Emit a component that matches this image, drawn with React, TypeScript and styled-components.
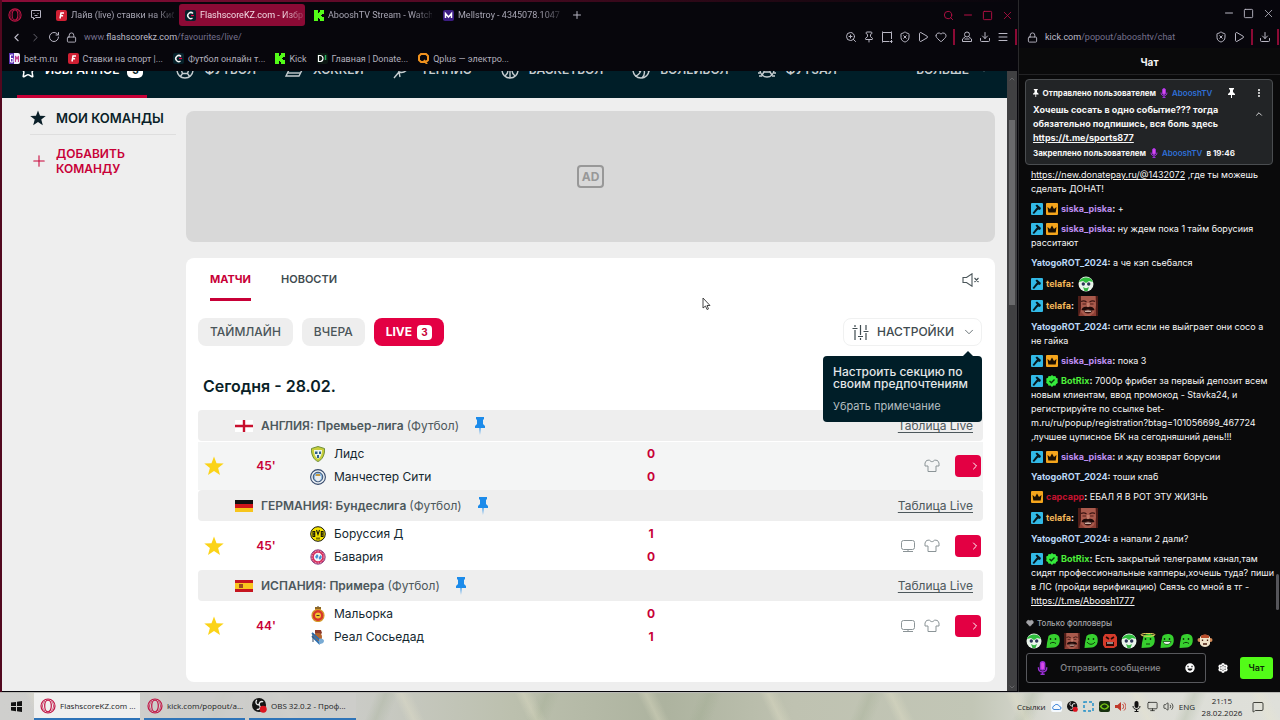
import React from "react";
import styled, { createGlobalStyle } from "styled-components";
import {
  ChevronDown, ChevronLeft, ChevronRight, ChevronUp, Download, EllipsisVertical, Heart, Lock, LucideIcon, Menu,
  MessageSquare, Minus, Monitor, Pin, Play, Plus, RotateCw, Search, Settings, ShieldX, Square, Star, Volume2, X, ZoomIn,
} from "lucide-react";

const ui = `Roboto, "Noto Sans", sans-serif`;
const inter = `Inter, "Noto Sans", sans-serif`;
const crimson = "#c80037";

const GlobalStyle = createGlobalStyle`
  * { box-sizing: border-box; }
  body { margin: 0; background: #07060c; font-family: ${inter}; }
  button { font: inherit; color: inherit; border: 0; background: none; padding: 0; cursor: pointer; }
  a { color: inherit; }
  h1, h2, h3, p, ul { margin: 0; padding: 0; }
  ul { list-style: none; }
  svg { flex: none; display: block; }
`;

/* ---------- shell ---------- */

const Desktop = styled.div`
  position: relative;
  height: 100vh;
  display: grid;
  grid-template-columns: minmax(0, 1fr);
  grid-template-rows: minmax(0, 1fr) 28px;
`;
const Windows = styled.div`
  display: flex;
  min-height: 0;
`;
const Browser = styled.section`
  flex: 1;
  min-width: 0;
  display: flex;
  flex-direction: column;
  background: #07060c;
  border-left: 2px solid #52081f;
`;
const TabStrip = styled.div`
  display: flex;
  align-items: center;
  height: 26px;
  padding: 2px 4px 0 6px;
  border-top: 2px solid;
  border-image: linear-gradient(90deg, #8c0c38 0, #6b0a2c 260px, #1d0712 800px, #07060c 100%) 1;
  border-width: 2px 0 0 0;
  gap: 8px;
  color: #b6b4c2;
`;
const Tabs = styled.div`
  display: flex;
  gap: 3px;
`;
const Tab = styled.button<{ $active?: boolean }>`
  width: 126px;
  height: 22px;
  padding: 0 2px 0 6px;
  display: flex;
  align-items: center;
  gap: 4px;
  border-radius: 3px;
  background: ${(p) => (p.$active ? "#8b0a35" : "transparent")};
  color: ${(p) => (p.$active ? "#f3dbe4" : "#a8a6b4")};
  font: 9px/14px ${ui};
`;
const TabText = styled.span`
  flex: 1;
  min-width: 0;
  white-space: nowrap;
  text-align: left;
  mask-image: linear-gradient(90deg, #000 80%, rgba(0, 0, 0, .2));
`;
const WindowButtons = styled.div<{ $tone: string; $edge?: number }>`
  display: flex;
  align-items: center;
  gap: 8px;
  margin-left: auto;
  padding-right: ${(p) => p.$edge ?? 0}px;
  color: ${(p) => p.$tone};
`;
const AddressBar = styled.div`
  display: flex;
  align-items: center;
  height: 22px;
  padding: 0 1px 0 8px;
  gap: 6px;
  color: #b9b7c4;
  font: 9px/14px ${ui};
`;
const Url = styled.div`
  flex: 1;
  padding-left: 1px;
  color: #75718c;
  white-space: nowrap;
  b { font-weight: 400; color: #bdbbc8; }
`;
const Rule = styled.i`
  width: 2px;
  height: 16px;
  background: #8b0a35;
`;
const Bookmarks = styled.nav`
  display: flex;
  align-items: center;
  height: 23px;
  padding: 0 0 2px 7px;
  gap: 10px;
  color: #b2b0bd;
  font: 9px/14px ${ui};
`;
const Bookmark = styled.a`
  display: flex;
  align-items: center;
  gap: 4px;
  text-decoration: none;
  white-space: nowrap;
`;

/* ---------- site ---------- */

const Viewport = styled.div`
  flex: 1;
  min-height: 0;
  display: flex;
  border-bottom: 1px solid #07060c;
`;
const Page = styled.div`
  flex: 1;
  min-width: 0;
  background: #eeeeee;
  overflow: hidden;
`;
const Scrollbar = styled.div`
  width: 10px;
  margin-right: 1px;
  padding-top: 4px;
  display: flex;
  flex-direction: column;
  align-items: center;
  justify-content: space-between;
  background: #404042;
  color: #77777a;
`;
const ScrollTrack = styled.div`
  flex: 1;
  padding-top: 37px;
`;
const Thumb = styled.div`
  width: 6px;
  height: 185px;
  background: #6a6a6c;
`;
const SportNav = styled.nav`
  display: flex;
  align-items: flex-end;
  gap: 29px;
  height: 27px;
  padding: 0 18px 0 15px;
  overflow: hidden;
  background: #001e28;
  color: #c6cdd0;
`;
const Sport = styled.a<{ $active?: boolean }>`
  display: flex;
  align-items: center;
  gap: ${(p) => (p.$active ? 8 : 10)}px;
  height: 60px;
  padding: ${(p) => (p.$active ? "7px 4px 0 2px" : "7px 0 0")};
  border-bottom: 3px solid ${(p) => (p.$active ? crimson : "transparent")};
  color: ${(p) => (p.$active ? "#ffffff" : "#c6cdd0")};
  font: 600 12px/16px ${inter};
  text-decoration: none;
  white-space: nowrap;
  &:last-child { margin-left: auto; }
`;
const Count = styled.span`
  width: 16px;
  height: 16px;
  border-radius: 5px;
  background: #fff;
  color: #001e28;
  font: 700 10px/16px ${inter};
  text-align: center;
`;
const Body = styled.div`
  display: flex;
  gap: 10px;
  padding: 13px 12px 10px 28px;
`;
const Side = styled.aside`
  width: 146px;
  flex: none;
`;
const SideTitle = styled.h2`
  display: flex;
  align-items: center;
  gap: 10px;
  height: 24px;
  padding-bottom: 9px;
  border-bottom: 1px solid #dedede;
  font: 600 13px/16px ${inter};
  color: #0a1f28;
  white-space: nowrap;
`;
const AddTeam = styled.button`
  display: flex;
  align-items: center;
  gap: 8px;
  margin-top: 11px;
  text-align: left;
  color: ${crimson};
  font: 600 12px/15px ${inter};
`;
const Column = styled.main`
  flex: 1;
  min-width: 0;
  display: flex;
  flex-direction: column;
  gap: 16px;
`;
const Ad = styled.div`
  height: 131px;
  display: grid;
  place-items: center;
  border-radius: 8px;
  background: #d8d8d8;
  span {
    padding: 2px 3px;
    border: 2px solid #989898;
    border-radius: 4px;
    color: #989898;
    font: 700 12px/15px ${inter};
  }
`;
const Panel = styled.section`
  height: 424px;
  padding: 0 12px;
  border-radius: 8px;
  background: #fff;
`;
const PanelTabs = styled.div`
  display: flex;
  align-items: center;
  height: 43px;
  gap: 30px;
  padding: 0 3px 0 12px;
  svg { margin-left: auto; }
`;
const PanelTab = styled.button<{ $active?: boolean }>`
  height: 43px;
  padding-top: 2px;
  border-bottom: 3px solid ${(p) => (p.$active ? crimson : "transparent")};
  color: ${(p) => (p.$active ? crimson : "#3f4b50")};
  font: ${(p) => (p.$active ? 700 : 600)} 11px/14px ${inter};
`;
const Filters = styled.div`
  display: flex;
  gap: 9px;
  margin-top: 17px;
`;
const Chip = styled.button<{ $live?: boolean }>`
  display: flex;
  align-items: center;
  gap: 5px;
  height: 28px;
  padding: 0 12px;
  border-radius: 8px;
  background: ${(p) => (p.$live ? "#e30043" : "#eeeeee")};
  color: ${(p) => (p.$live ? "#fff" : "#4a5559")};
  font: ${(p) => (p.$live ? 700 : 500)} 12px/14px ${inter};
`;
const LiveCount = styled.span`
  width: 15px;
  height: 15px;
  border-radius: 4px;
  background: #fff;
  color: ${crimson};
  font: 700 10px/15px ${inter};
`;
const SettingsWrap = styled.div`
  position: relative;
  margin-left: auto;
  margin-right: 1px;
`;
const SettingsButton = styled.button`
  display: flex;
  align-items: center;
  gap: 8px;
  height: 28px;
  padding: 0 5px 0 8px;
  border: 1px solid #f0f1f1;
  border-radius: 8px;
  color: #3f4b50;
  font: 500 12px/14px ${inter};
`;
const Tooltip = styled.div`
  position: absolute;
  z-index: 2;
  top: 38px;
  right: 0;
  width: 159px;
  height: 66px;
  padding: 10px 0 0 10px;
  border-radius: 4px;
  background: #001e28;
  color: #e3e7e9;
  font: 500 12px/12px ${inter};
  white-space: nowrap;
  &::before {
    content: "";
    position: absolute;
    top: -5px;
    right: 8px;
    border: 6px solid transparent;
    border-top: 0;
    border-bottom-color: #001e28;
  }
  button { display: block; margin-top: 10px; color: #b5bec1; font: 400 11px/12px ${inter}; }
`;
const Day = styled.h1`
  margin: 30px 0 14px 5px;
  color: #0a1f28;
  font: 600 16px/20px ${inter};
`;
const LeagueBar = styled.header`
  display: flex;
  align-items: center;
  height: 31px;
  margin-bottom: 1px;
  padding: 0 10px 0 37px;
  border-radius: 4px;
  background: #eeeeee;
  color: #4d585c;
  font: 400 12px/16px ${inter};
  h3 { margin-left: 8px; font: 600 12px/16px ${inter}; }
  h3 span { font-weight: 400; }
  h3 + svg { margin-left: 16px; }
  a { margin-left: auto; text-underline-offset: 2px; }
`;
const MatchRow = styled.div<{ $hover?: boolean }>`
  display: flex;
  align-items: center;
  height: 48px;
  padding: 0 2px 0 6px;
  background: ${(p) => (p.$hover ? "#f4f5f5" : "#fff")};
`;
const Minute = styled.time`
  width: 34px;
  margin-left: 25px;
  text-align: center;
  color: ${crimson};
  font: 600 12px/16px ${inter};
`;
const Teams = styled.ul`
  width: 316px;
  margin-left: 27px;
  padding-bottom: 2px;
`;
const Team = styled.li`
  display: flex;
  align-items: center;
  gap: 8px;
  height: 23px;
  color: #14272f;
  font: 400 12px/16px ${inter};
`;
const Scores = styled.ul`
  width: 50px;
  padding-bottom: 2px;
  text-align: center;
  color: ${crimson};
  font: 700 12px/23px ${inter};
`;
const MatchLinks = styled.div`
  display: flex;
  align-items: center;
  gap: 8px;
  margin-left: auto;
`;
const LiveButton = styled.button`
  width: 26px;
  height: 22px;
  margin-left: 7px;
  border-radius: 4px;
  background: #e30043;
  color: #fff;
  display: flex;
  align-items: center;
  justify-content: flex-end;
`;

/* ---------- chat ---------- */

const Chat = styled.aside`
  width: 262px;
  flex: none;
  display: flex;
  flex-direction: column;
  min-height: 0;
  background: #0a0a0b;
  border-left: 1px solid #29292b;
  color: #f6f6f6;
  font: 400 9px/14px ${inter};
`;
const ChatChrome = styled.div`
  background: #07060c;
`;
const ChatControls = styled.div`
  display: flex;
  align-items: center;
  height: 26px;
`;
const ChatTitle = styled.h2`
  height: 27px;
  margin-bottom: 4px;
  border-bottom: 1px solid #232325;
  text-align: center;
  font: 700 10px/28px ${inter};
`;
const PinnedCard = styled.article`
  height: 86px;
  flex: none;
  margin: 0 7px 0 6px;
  padding: 6px 8px 0 7px;
  border: 1px solid #4a4d50;
  border-radius: 4px;
  background: #222426;
  font: 700 9px/14px ${inter};
`;
const PinLine = styled.div`
  display: flex;
  align-items: center;
  gap: 4px;
  height: 14px;
  font: 700 8px/14px ${inter};
  white-space: nowrap;
  em { font-style: normal; font-weight: 600; color: #2f6fd6; }
  button:first-of-type { margin-left: auto; margin-right: 15px; }
`;
const PinBody = styled.div`
  display: flex;
  justify-content: space-between;
  align-items: flex-start;
  margin: 3px 0 1px;
  white-space: nowrap;
  button { padding-top: 6px; }
`;
const MessageArea = styled.div`
  flex: 1;
  min-height: 0;
  display: flex;
`;
const Messages = styled.ul`
  flex: 1;
  min-width: 0;
  overflow: hidden;
  display: flex;
  flex-direction: column;
  justify-content: flex-end;
  padding: 0 0 0 12px;
`;
const Message = styled.li<{ $tall?: boolean }>`
  flex: none;
  min-height: ${(p) => (p.$tall ? 22 : 20)}px;
  padding: ${(p) => (p.$tall ? "0" : "3px 0")};
  line-height: ${(p) => (p.$tall ? "22px" : "14px")};
  white-space: nowrap;
  strong { font-weight: 700; }
  > svg { display: inline-block; vertical-align: middle; margin: -2px 3px 0 0; }
  > svg.emote { margin: -2px 0 0 2px; }
`;
const ChatThumb = styled.div`
  width: 3px;
  height: 36px;
  margin: auto 1px 1px 0;
  border-radius: 2px;
  background: #55555a;
`;
const ChatFooter = styled.form`
  flex: none;
  padding: 5px 7px 9px 7px;
`;
const FollowersOnly = styled.p`
  display: flex;
  align-items: center;
  gap: 3px;
  color: #a4a4a8;
  font: 500 8px/14px ${inter};
`;
const EmoteRow = styled.div`
  display: flex;
  gap: 3px;
  height: 20px;
  margin: 1px 0 2px;
  align-items: center;
`;
const Compose = styled.div`
  display: flex;
  align-items: center;
  gap: 12px;
`;
const Field = styled.label`
  flex: 1;
  min-width: 0;
  display: flex;
  align-items: center;
  gap: 12px;
  height: 30px;
  padding: 0 10px;
  border: 1px solid #57585c;
  border-radius: 3px;
  input {
    flex: 1;
    width: 50px;
    border: 0;
    padding: 0;
    outline: 0;
    background: none;
    color: #fff;
    font: 500 9px/14px ${inter};
  }
  input::placeholder { color: #85868a; opacity: 1; }
`;
const SendButton = styled.button`
  width: 33px;
  height: 22px;
  border-radius: 3px;
  background: #53fc18;
  color: #0d2a06;
  font: 600 9px/14px ${inter};
`;

/* ---------- taskbar ---------- */

const Taskbar = styled.footer`
  display: flex;
  align-items: stretch;
  gap: 4px;
  padding: 0 16px 0 11px;
  border-top: 1px solid #b9b9b5;
  background:
    repeating-linear-gradient(64deg, transparent 0 34px, rgba(236, 232, 205, .3) 42px, transparent 52px 110px),
    repeating-linear-gradient(112deg, transparent 0 48px, rgba(150, 165, 135, .25) 58px, transparent 70px 150px),
    linear-gradient(90deg, #cfcfcd 0, #cbccc8 27%, #bcc0ae 40%, #adb39f 52%, #bfc2b1 62%, #c2c6b6 76%, #dadbd4 82%, #dfe0da 100%);
  color: #22231f;
  font: 400 8px/12px "Open Sans", "Noto Sans", sans-serif;
`;
const Start = styled.button`
  display: flex;
  align-items: center;
  width: 19px;
`;
const Task = styled.button<{ $active?: boolean; $width: number }>`
  display: flex;
  align-items: center;
  gap: 4px;
  width: ${(p) => p.$width}px;
  padding-left: ${(p) => (p.$active ? 6 : 3)}px;
  border-bottom: 2px solid #2f74b8;
  background: ${(p) => (p.$active ? "#f0f0ef" : "rgba(205, 205, 203, .8)")};
  white-space: nowrap;
`;
const Tray = styled.div`
  display: flex;
  align-items: center;
  gap: 5px;
  margin-left: auto;
  white-space: nowrap;
`;
const Clock = styled.time`
  width: 40px;
  margin: 0 5px 0 2px;
  display: flex;
  flex-direction: column;
  align-items: center;
`;
const Cursor = styled.svg`
  position: absolute;
  left: 702px;
  top: 297px;
  pointer-events: none;
`;

/* ---------- drawings ---------- */

const I = ({ of: Icon, s = 11, w = 2 }: { of: LucideIcon; s?: number; w?: number }) => <Icon size={s} strokeWidth={w} />;

const Opera = ({ s = 14, c = "#c21546" }) => (
  <svg width={s} height={s} viewBox="0 0 16 16" fill="none" stroke={c} strokeWidth="1.2">
    <circle cx="8" cy="8" r="7" /><ellipse cx="8" cy="8" rx="3.3" ry="5.8" /><path d="M5 3.2C1.6 6 1.6 10 5 12.8M11 3.2c3.400 2.800 3.400 6.800 0 9.600" strokeWidth=".7" />
  </svg>
);
const TabIsland = () => (
  <svg width="12" height="12" viewBox="0 0 12 12" fill="none" stroke="#b6b4c2"><path d="M1.500 1.500h9v7h-5l-2 2v-2h-2zM4 4v1M8 4v1M4.500 6.500h3" /></svg>
);
const Snapshot = () => (
  <svg width="12" height="12" viewBox="0 0 12 12" fill="none" stroke="#b9b7c4"><path d="M10.500 8V1.500h-9v9H8M1 1h1M10 1h1M1 11h1M8.500 10.500h3M10.500 9v3" /></svg>
);
const Profile = () => (
  <svg width="12" height="12" viewBox="0 0 12 12" fill="none" stroke="#b9b7c4"><circle cx="6" cy="3.500" r="2.500" /><path d="M4.500 5.500 1.500 8v2.500h9V8l-3-2.500M3.500 8h5" /></svg>
);
const Tile = ({ bg, children, s = 11 }: { bg: string; children: React.ReactNode; s?: number }) => (
  <svg width={s} height={s} viewBox="0 0 11 11"><rect width="11" height="11" rx="2" fill={bg} />{children}</svg>
);
const FIcon = () => <Tile bg="#d01f33"><path d="M4 8.500 5 3h3M4.500 5.700h2.600" stroke="#fff" strokeWidth="1.500" fill="none" /></Tile>;
const FlashIcon = () => (
  <Tile bg="#06222b"><path d="M8 3.500A3 3 0 1 0 7.500 8" stroke="#f4f4f4" strokeWidth="1.500" fill="none" /><path d="M6 5.500h3" stroke="#e30043" strokeWidth="1.200" /></Tile>
);
const KickIcon = () => (
  <svg width="10" height="11" viewBox="0 0 10 11" fill="#53fc18"><path d="M0 0h4v3h1V2h1V0h4v4H8v1H7v1h1v1h2v4H6V9H5V8H4v3H0z" /></svg>
);
const MIcon = () => <Tile bg="#3c1d83"><path d="M2.500 8V3.500L5.500 7l3-3.500V8" stroke="#fff" strokeWidth="1.500" fill="none" /></Tile>;
const BmIcon = () => <Tile bg="#f3f0fa"><path d="M0 0h5v11H0z" fill="#5c35b5" /><path d="M4 2H1.500v7H4V5.500H1.500" stroke="#fff" fill="none" /><path d="M6.500 9V3l1.500 3 1.500-3v6" stroke="#c23a8a" strokeWidth="1.100" fill="none" /></Tile>;
const DIcon = () => <Tile bg="#0c1712"><path d="M1.500 2.500h2Q6 3 6 5.500T3.500 8.500h-2z" stroke="#fff" strokeWidth="1.200" fill="none" /><path d="M8.500 2v5" stroke="#27b35f" strokeWidth="1.500" /></Tile>;
const QIcon = () => (
  <svg width="11" height="11" viewBox="0 0 11 11" fill="none" stroke="#f0921e" strokeWidth="2"><path d="M3 1h5l2 2v4L8 9H3L1 7V3zM6 7l3 4" /></svg>
);

const ball = { width: 18, height: 18, viewBox: "0 0 18 18", fill: "none", stroke: "currentColor", strokeWidth: 1.4 };
const sportIcons: Record<string, React.ReactNode> = {
  football: <svg {...ball}><circle cx="9" cy="9" r="8" /><path d="m9 5 4 3-1.500 4.500h-5L5 8zM9 1v4M13 8l4-1M11.500 12.500 14 16M6.500 12.500 4 16M5 8 1 7" /></svg>,
  hockey: <svg {...ball}><path d="M4 9h13l-3 6H1z" /><path d="M2 12h13" /></svg>,
  tennis: <svg {...ball}><path d="M1 17l5-6M6 11c-1-4 3-9 10-9 1 6-5 11-10 9zM6 11l1 5" /></svg>,
  basket: <svg {...ball}><circle cx="9" cy="9" r="8" /><path d="M9 1v16M1 9h16M4 3c4 4 4 9 0 12M14 3c-4 4-4 9 0 12" /></svg>,
  volley: <svg {...ball}><circle cx="9" cy="9" r="8" /><path d="M9 9c0-4-2-6-4-7M9 9c4-1 7 0 8 2M9 9c-1 4-4 6-6 6M12 9c1 3 0 6-2 8M2 8c2-1 4-1 6 3" /></svg>,
  futsal: <svg {...ball}><circle cx="9" cy="9" r="7" /><path d="M6 7h6v4H6zM9 2v5M6 11l-2 3M12 11l2 3M0 12h2M16 12h2M1 15h3M14 15h3" /></svg>,
};

const StarFill = ({ s, c }: { s: number; c: string }) => (
  <svg width={s} height={s} viewBox="0 0 20 20" fill={c}><path d="m10 .5 2.500 6.700 7.200.3-5.600 4.500 1.900 7-6-4-6 4 1.900-7L.3 7.500l7.200-.3z" /></svg>
);
const PinBlue = () => (
  <svg width="10" height="18" viewBox="0 0 10 18" fill="#1c8bea"><path d="M1 0h8v2L8 3v4l2 2v2H5.600L5 18l-.6-7H0V9l2-2V3L1 2z" /></svg>
);
const PinSmall = ({ s = 10 }) => (
  <svg width={s * 0.7} height={s} viewBox="0 0 7 10" fill="#fff"><path d="M1 0h5v1L5 2v2l2 2v1H4v3H3V7H0V6l2-2V2L1 1z" /></svg>
);
const Sliders = () => (
  <svg width="17" height="17" viewBox="0 0 17 17" fill="none" stroke="#3f4b50" strokeWidth="1.200">
    <path d="M3 1v2M3 6v10M.5 4.500h5M8.500 1v10M8.500 14v2M6 12.500h5M14 1v5M14 9v7M11.500 7.500h5" />
  </svg>
);
const Mute = () => (
  <svg width="18" height="14" viewBox="0 0 18 14" fill="none" stroke="#4a5559" strokeWidth="1.100"><path d="M1 4.500h3.500L10 .8v12.400L4.500 9.500H1zM12.500 5l4 4M16.500 5l-4 4" /></svg>
);
const Tv = () => (
  <svg width="16" height="13" viewBox="0 0 16 13" fill="none" stroke="#8b9497"><rect x="1.500" y=".5" width="13" height="9" rx="2" /><path d="M8 9.500v2M3 11.500h10" /></svg>
);
const Shirt = () => (
  <svg width="16" height="14" viewBox="0 0 16 14" fill="none" stroke="#8b9497"><path d="M5.500 1 2.500 1.500 1 4v3h3v5.500h8V7h3V4l-1.500-2.500-3-.5c-1 2.200-4 2.200-5 0z" strokeLinejoin="round" /></svg>
);

const flags: Record<string, React.ReactNode> = {
  en: <svg width="18" height="12"><rect width="18" height="12" fill="#fff" /><path d="M9 0v12M0 6h18" stroke="#c8102e" strokeWidth="2.400" /></svg>,
  de: <svg width="18" height="12"><path d="M0 0h18v4H0z" fill="#111" /><path d="M0 4h18v4H0z" fill="#d0161b" /><path d="M0 8h18v4H0z" fill="#f7c51c" /></svg>,
  es: <svg width="18" height="12"><path d="M0 0h18v12H0z" fill="#c6151f" /><path d="M0 3h18v6H0z" fill="#f9c51e" /><path d="M4 4h4v4H4z" fill="#9b4a20" /></svg>,
};
const crests: Record<string, React.ReactNode> = {
  leeds: <svg width="16" height="16" viewBox="0 0 16 16"><path d="M1.500 2.500 8 .5l6.500 2C15 9 12 14 8 15.500 4 14 1 9 1.500 2.500z" fill="#c8cf3b" stroke="#6f8f3a" /><path d="M4 4h8c0 4-1 7-4 9-3-2-4-5-4-9z" fill="#eef4f0" /><path d="M5 5.500h2.500v2.500H5zM9 5.500h2v2.500H9zM7 9h2v3H7z" fill="#2d5f8c" /></svg>,
  city: <svg width="16" height="16" viewBox="0 0 16 16"><circle cx="8" cy="8" r="7.400" fill="#e9f0f5" stroke="#34486b" strokeWidth="1.100" /><circle cx="8" cy="8" r="4.800" fill="#8fb9dd" stroke="#34486b" /><path d="M5 7h6v2c0 2-2 3-3 3.500C7 12 5 11 5 9z" fill="#e9edf0" /><path d="M6 5h4v2H6z" fill="#c89b3e" /></svg>,
  bvb: <svg width="16" height="16" viewBox="0 0 16 16"><circle cx="8" cy="8" r="7.300" fill="#f4e300" stroke="#15150a" /><path d="M3 5.500h1.700v5H3zM3 8h2M11.300 5.500H13v5h-1.700zM11 8h2M6.500 4l1.500 4.500L9.500 4M7 11.500v2M9 11.500v2" fill="none" stroke="#15150a" strokeWidth="1.100" /></svg>,
  bayern: <svg width="16" height="16" viewBox="0 0 16 16"><circle cx="8" cy="8" r="7.200" fill="#d32c5c" stroke="#8d4f8e" /><circle cx="8" cy="8" r="6" fill="none" stroke="#f5c8d5" strokeWidth=".8" strokeDasharray="1.500 1.200" /><circle cx="8" cy="8" r="4.200" fill="#f2f6fc" /><path d="m5 8 2-3 1.500 2L7 10zM8.500 9l2-3 1.500 2-2 3z" fill="#4390d2" /></svg>,
  mallorca: <svg width="16" height="16" viewBox="0 0 16 16"><path d="M5 1h6v3H5z" fill="#d09a2b" /><circle cx="8" cy="9.500" r="6" fill="#d8352b" stroke="#d49b2a" strokeWidth="1.200" /><circle cx="8" cy="9.500" r="3" fill="#f1c232" /><path d="M6 1v2M8 0v3M10 1v2M6.500 9.500h3" stroke="#4a3520" /></svg>,
  sociedad: <svg width="16" height="16" viewBox="0 0 16 16"><path d="M5 1h6l1 3-2 2H6L5 4z" fill="#8c3a2a" /><circle cx="8" cy="8" r="4" fill="#b5652e" /><path d="M2 4l10 9M2 7l8 8" stroke="#2c6fb0" strokeWidth="1.800" /><path d="M9 10c2-1 5 0 5 2s-2 3-5 3z" fill="#79abd4" /><path d="M3 5v8" stroke="#364f6b" /></svg>,
};

const Mod = () => (
  <svg width="12" height="12" viewBox="0 0 12 12"><rect width="12" height="12" rx="1" fill="#32b9e6" /><path d="M4.500 2.500 6 1.500l4 3.500-1 2-1.500-.5L6.500 7 3 11 1.500 10l3.500-4.500L6 4.500z" fill="#06161c" /></svg>
);
const Vip = () => (
  <svg width="12" height="12" viewBox="0 0 12 12"><rect width="12" height="12" rx="1" fill="#f5a51c" /><path d="M1.500 4 4 6l2-3.500L8 6l2.500-2-.8 5.500H2.300z" fill="#1a0f02" /></svg>
);
const Verified = () => (
  <svg width="12" height="12" viewBox="0 0 12 12"><path d="m6 0 1.500 1.200 1.900-.3.700 1.800 1.700.8L11.500 6l.3 2-1.700 1-.7 1.800-1.900-.2L6 12l-1.500-1.400-1.900.2L1.900 9 .2 8l.3-2-.3-2.500 1.700-.8.700-1.800 1.900.3z" fill="#35ea3c" /><path d="m3.500 6 1.800 1.800L8.500 4.500" stroke="#06350a" strokeWidth="1.300" fill="none" /></svg>
);
const MicBadge = ({ s = 10 }) => (
  <svg width={s * 0.8} height={s} viewBox="0 0 8 10" fill="none" stroke="#9a2fd6"><rect x="2.500" y=".5" width="3" height="6" rx="1.500" fill="#d94be8" /><path d="M1 4.500C1 9 7 9 7 4.500M4 8v2M2.500 9.500h3" /></svg>
);
const Joker = ({ s = 16 }) => (
  <svg className="emote" width={s} height={s} viewBox="0 0 16 16"><circle cx="8" cy="8" r="7.500" fill="#e9f3ea" /><path d="M1 6C2 1 13-1 15 6L11 5 8 7 5 5z" fill="#2fbf3e" /><circle cx="5.300" cy="8" r="1.700" fill="#2c3557" /><circle cx="10.700" cy="8" r="1.700" fill="#2c3557" /><path d="M5 11c2 1.500 4 1.500 6 0l-1.500 4h-3z" fill="#36b544" /></svg>
);
const Face = ({ s = 20 }) => (
  <svg className="emote" width={s} height={s} viewBox="0 0 20 20">
    <path d="M0 0h20v20H0z" fill="#8d3f35" /><path d="M0 0h3v12L1 20H0zM18 0h2v20h-2z" fill="#4d1c17" /><path d="M3 0h14l1 9-2 8-4 3H7l-4-4z" fill="#a95a4c" />
    <path d="M3 5.500q3-1.500 5.500.5M11.500 6q3-2 5.500-.5" stroke="#3a1512" strokeWidth="1.200" fill="none" /><path d="M4.500 8h3.500M12 8h3.500" stroke="#521f1a" strokeWidth="1.100" />
    <path d="M9 7v4h2.500V7" fill="#c27b69" /><path d="M3.500 14c1-3.500 4-3.500 6.500-2.700 2.500-.8 5.500-.8 6.500 2.700-2 1-4-.5-6.500-.5S5.500 15 3.500 14z" fill="#1e0a09" />
    <path d="M5.500 14.500q4.500-1.500 9 0-1 3-4.500 3t-4.500-3z" fill="#37110f" /><path d="M6.500 14.800q3.500-1 7 0l-.5 1.200H7z" fill="#c8ada2" />
  </svg>
);
const Blob = ({ mood }: { mood: number }) => (
  <svg width="16" height="16" viewBox="0 0 16 16">
    <path d="M3.500 3C6 0 14 0 14.500 5c1 5-1 9-6 9.500L1.500 15l.5-5z" fill="#37d02f" />
    <path d="M5.500 5v2M10.500 5v2" stroke="#0c3c0a" strokeWidth="1.400" />
    {mood === 0 && <path d="M5 10.500c2-1.500 4-1.500 6 0" stroke="#0c3c0a" fill="none" />}
    {mood === 1 && <path d="M4 9c2 3 6 3 8 0" stroke="#0c3c0a" fill="none" />}
    {mood === 2 && <><path d="M6 11h4" stroke="#0c3c0a" /><ellipse cx="8" cy="1.800" rx="7" ry="1.400" fill="none" stroke="#f4dc62" /></>}
    {mood === 3 && <path d="M4 8.500h8c-1 4-7 4-8 0z" fill="#e9f5e9" stroke="#0c3c0a" strokeWidth=".7" />}
  </svg>
);
const Angry = () => (
  <svg width="16" height="16" viewBox="0 0 16 16"><path d="M3 1h10l2 3v9l-3 2H3l-2-3V4z" fill="#d53b2b" /><path d="m4 4 3 2M12 4 9 6" stroke="#240805" strokeWidth="1.600" /><path d="M4 9h8v4H4z" fill="#2a0906" /><path d="M5 10h6" stroke="#fff" /></svg>
);
const Monkey = () => (
  <svg width="16" height="16" viewBox="0 0 16 16"><circle cx="2.500" cy="7" r="2" fill="#d38b58" /><circle cx="13.500" cy="7" r="2" fill="#d38b58" /><path d="M3 4c2-3 8-3 10 0v7c-2 4-8 4-10 0z" fill="#efe2c8" /><path d="M4 3c2-2 6-2 8 0v2H4z" fill="#b84d2a" /><path d="M5.500 6.500v1.500M10.500 6.500v1.500M6 11h4" stroke="#4b1e12" strokeWidth="1.300" /></svg>
);
const Smiley = () => (
  <svg width="10" height="10" viewBox="0 0 10 10"><circle cx="5" cy="5" r="4.700" fill="#fff" /><path d="M3 2.800v1.400M7 2.800v1.400" stroke="#111" strokeWidth="1.200" /><path d="M2.500 5.500h5c-.5 3-4.500 3-5 0z" fill="#111" /></svg>
);
const Obs = ({ s = 15 }) => (
  <svg width={s} height={s} viewBox="0 0 16 16"><circle cx="7.500" cy="7.500" r="7.500" fill="#141414" /><path d="M5 2c-2 3 0 6 3 5M12 4c-3-1-5 1-4 4M5 12c3 1 5-2 3-4" stroke="#e8e8e8" strokeWidth="1.400" fill="none" /><circle cx="12" cy="12" r="3.700" fill="#dd1420" /></svg>
);

/* ---------- data ---------- */

const leagues = [
  { flag: "en", country: "АНГЛИЯ", name: "Премьер-лига", min: "45", tv: false, hover: true, teams: [["leeds", "Лидс", 0], ["city", "Манчестер Сити", 0]] },
  { flag: "de", country: "ГЕРМАНИЯ", name: "Бундеслига", min: "45", tv: true, hover: false, teams: [["bvb", "Боруссия Д", 1], ["bayern", "Бавария", 0]] },
  { flag: "es", country: "ИСПАНИЯ", name: "Примера", min: "44", tv: true, hover: false, teams: [["mallorca", "Мальорка", 0], ["sociedad", "Реал Сосьедад", 1]] },
] as const;

const sports = [
  ["football", "ФУТБОЛ"], ["hockey", "ХОККЕЙ"], ["tennis", "ТЕННИС"], ["basket", "БАСКЕТБОЛ"], ["volley", "ВОЛЕЙБОЛ"], ["futsal", "ФУТЗАЛ"],
];

const users = {
  siska: { name: "siska_piska", color: "#bc8df0", badges: [Mod, Vip] },
  yatogo: { name: "YatogoROT_2024", color: "#b9d6f6", badges: [] },
  telafa: { name: "telafa", color: "#f2b658", badges: [Mod] },
  botrix: { name: "BotRix", color: "#4df03a", badges: [Mod, Verified] },
  cap: { name: "capcapp", color: "#c4122f", badges: [Vip] },
};
const messages: { u: keyof typeof users; t: React.ReactNode; tall?: boolean }[] = [
  { u: "siska", t: "+" },
  { u: "siska", t: <>ну ждем пока 1 тайм борусиия<br />расситают</> },
  { u: "yatogo", t: "а че кэп сьебался" },
  { u: "telafa", t: <Joker />, tall: true },
  { u: "telafa", t: <Face />, tall: true },
  { u: "yatogo", t: <>сити если не выйграет они сосо а<br />не гайка</> },
  { u: "siska", t: "пока 3" },
  { u: "botrix", t: <>7000р фрибет за первый депозит всем<br />новым клиентам, ввод промокод - Stavka24, и<br />регистрируйте по ссылке bet-<br />m.ru/ru/popup/registration?btag=101056699_467724<br />,лучшее цуписное БК на сегодняшний день!!!</> },
  { u: "siska", t: "и жду возврат борусии" },
  { u: "yatogo", t: "тоши клаб" },
  { u: "cap", t: "ЕБАЛ Я В РОТ ЭТУ ЖИЗНЬ" },
  { u: "telafa", t: <Face />, tall: true },
  { u: "yatogo", t: "а напали 2 дали?" },
  { u: "botrix", t: <>Есть закрытый телеграмм канал,там<br />сидят профессиональные капперы,хочешь туда? пиши<br />в ЛС (пройди верификацию) Связь со мной в тг -<br /><a href="https://t.me/Aboosh1777">https://t.me/Aboosh1777</a></> },
];

/* ---------- screens ---------- */

const BrowserChrome = () => (
  <>
    <TabStrip>
      <Opera />
      <TabIsland />
      <Tabs>
        <Tab><FIcon /><TabText>Лайв (live) ставки на Киб</TabText></Tab>
        <Tab $active><FlashIcon /><TabText>FlashscoreKZ.com - Избр</TabText></Tab>
        <Tab><KickIcon /><TabText>AbooshTV Stream - Watch</TabText></Tab>
        <Tab><MIcon /><TabText>Mellstroy - 4345078.1047</TabText></Tab>
      </Tabs>
      <I of={Plus} s={12} />
      <WindowButtons $tone="#b80f45">
        <I of={Search} /><I of={Minus} s={12} /><I of={Square} /><I of={X} s={13} w={1.500} />
      </WindowButtons>
    </TabStrip>
    <AddressBar>
      <I of={ChevronLeft} s={13} /><I of={ChevronRight} s={13} w={1} /><I of={RotateCw} s={12} /><I of={Lock} />
      <Url>www.<b>flashscorekz.com</b>/favourites/live/</Url>
      <I of={ZoomIn} s={12} /><I of={Pin} s={12} /><Snapshot /><I of={ShieldX} s={12} /><I of={Play} s={12} /><I of={Heart} s={12} />
      <Rule /><Profile /><I of={Download} s={12} /><I of={Menu} s={12} /><Rule />
    </AddressBar>
    <Bookmarks>
      <Bookmark href="#"><BmIcon />bet-m.ru</Bookmark>
      <Bookmark href="#"><FIcon />Ставки на спорт |...</Bookmark>
      <Bookmark href="#"><FlashIcon />Футбол онлайн т...</Bookmark>
      <Bookmark href="#"><KickIcon />Kick</Bookmark>
      <Bookmark href="#"><DIcon />Главная | Donate...</Bookmark>
      <Bookmark href="#"><QIcon />Qplus — электро...</Bookmark>
    </Bookmarks>
  </>
);

const League = ({ l }: { l: (typeof leagues)[number] }) => (
  <article>
    <LeagueBar>
      {flags[l.flag]}
      <h3>{l.country}: {l.name} <span>(Футбол)</span></h3>
      <PinBlue />
      <a href="#">Таблица Live</a>
    </LeagueBar>
    <MatchRow $hover={l.hover}>
      <StarFill s={20} c="#fbd318" />
      <Minute>{l.min}'</Minute>
      <Teams>{l.teams.map(([c, n]) => <Team key={n}>{crests[c]}{n}</Team>)}</Teams>
      <Scores>{l.teams.map(([, n, s]) => <li key={n}>{s}</li>)}</Scores>
      <MatchLinks>
        {l.tv && <Tv />}<Shirt />
        <LiveButton aria-label="Live"><I of={ChevronRight} s={12} /></LiveButton>
      </MatchLinks>
    </MatchRow>
  </article>
);

const Site = () => (
  <Viewport>
    <Page>
      <SportNav>
        <Sport href="#" $active><Star size={18} />ИЗБРАННОЕ<Count>3</Count></Sport>
        {sports.map(([k, n]) => <Sport href="#" key={k}>{sportIcons[k]}{n}</Sport>)}
        <Sport href="#">БОЛЬШЕ<I of={ChevronDown} s={10} /></Sport>
      </SportNav>
      <Body>
        <Side>
          <SideTitle><StarFill s={16} c="#0a1f28" />МОИ КОМАНДЫ</SideTitle>
          <AddTeam><Plus size={18} strokeWidth={1.400} /><span>ДОБАВИТЬ<br />КОМАНДУ</span></AddTeam>
        </Side>
        <Column>
          <Ad><span>AD</span></Ad>
          <Panel>
            <PanelTabs>
              <PanelTab $active>МАТЧИ</PanelTab>
              <PanelTab>НОВОСТИ</PanelTab>
              <Mute />
            </PanelTabs>
            <Filters>
              <Chip>ТАЙМЛАЙН</Chip>
              <Chip>ВЧЕРА</Chip>
              <Chip $live>LIVE<LiveCount>3</LiveCount></Chip>
              <SettingsWrap>
                <SettingsButton><Sliders />НАСТРОЙКИ<ChevronDown size={14} strokeWidth={1.300} /></SettingsButton>
                <Tooltip>Настроить секцию по<br />своим предпочтениям<button>Убрать примечание</button></Tooltip>
              </SettingsWrap>
            </Filters>
            <Day>Сегодня - 28.02.</Day>
            {leagues.map((l) => <League key={l.flag} l={l} />)}
          </Panel>
        </Column>
      </Body>
    </Page>
    <Scrollbar>
      <ChevronUp size={8} /><ScrollTrack><Thumb /></ScrollTrack><ChevronDown size={8} />
    </Scrollbar>
  </Viewport>
);

const ChatWindow = () => (
  <Chat>
    <ChatChrome>
      <ChatControls>
        <WindowButtons $tone="#b9b7c4" $edge={5}><I of={Minus} s={12} /><I of={Square} /><I of={X} s={13} w={1.500} /></WindowButtons>
      </ChatControls>
      <AddressBar>
        <I of={Lock} /><Url><b>kick.com</b>/popout/abooshtv/chat</Url>
        <I of={ShieldX} s={12} /><I of={Play} s={12} /><Rule /><I of={Download} s={12} /><Rule />
      </AddressBar>
    </ChatChrome>
    <ChatTitle>Чат</ChatTitle>
    <PinnedCard>
      <PinLine><PinSmall s={8} />Отправлено пользователем<MicBadge /><em>AbooshTV</em>
        <button aria-label="Закрепить"><PinSmall /></button><button aria-label="Ещё"><I of={EllipsisVertical} s={10} w={3} /></button></PinLine>
      <PinBody>
        <p>Хочешь сосать в одно событие??? тогда<br />обязательно подпишись, вся боль здесь<br /><a href="https://t.me/sports877">https://t.me/sports877</a></p>
        <button aria-label="Свернуть"><I of={ChevronUp} s={10} /></button>
      </PinBody>
      <PinLine>Закреплено пользователем <MicBadge /><em>AbooshTV</em>в 19:46</PinLine>
    </PinnedCard>
    <MessageArea>
      <Messages>
        <Message><a href="https://new.donatepay.ru/@1432072">https://new.donatepay.ru/@1432072</a> ,где ты можешь<br />сделать ДОНАТ!</Message>
        {messages.map((m, i) => {
          const u = users[m.u];
          return (
            <Message key={i} $tall={m.tall}>
              {u.badges.map((B, k) => <B key={k} />)}
              <strong><span style={{ color: u.color }}>{u.name}</span>:</strong> {m.t}
            </Message>
          );
        })}
      </Messages>
      <ChatThumb />
    </MessageArea>
    <ChatFooter>
      <FollowersOnly><Heart size={8} fill="#a4a4a8" />Только фолловеры</FollowersOnly>
      <EmoteRow>
        <Joker /><Blob mood={0} /><Face s={16} /><Blob mood={1} /><Angry /><Joker /><Blob mood={2} /><Blob mood={3} /><Blob mood={0} /><Monkey />
      </EmoteRow>
      <Compose>
        <Field><MicBadge s={14} /><input aria-label="Сообщение" placeholder="Отправить сообщение" /><Smiley /></Field>
        <button type="button" aria-label="Настройки чата"><Settings size={10} strokeWidth={4} color="#fff" /></button>
        <SendButton type="button">Чат</SendButton>
      </Compose>
    </ChatFooter>
  </Chat>
);

const TaskbarView = () => (
  <Taskbar>
    <Start aria-label="Пуск"><svg width="11" height="11" viewBox="0 0 11 11" fill="#111"><path d="M0 1.500 5 1v4H0zM6 .8 11 0v5H6zM0 6h5v4.200L0 9.500zM6 6h5v5l-5-.8z" /></svg></Start>
    <Task $active $width={106}><Opera s={16} />FlashscoreKZ.com ...</Task>
    <Task $width={101}><Opera s={16} />kick.com/popout/a...</Task>
    <Task $width={107}><Obs />OBS 32.0.2 - Проф...</Task>
    <Tray>
      Ссылки
      <Tile bg="#f4f9fe"><path d="M3 8.500h5.500a1.500 1.500 0 0 0 0-3A3 3 0 0 0 3 5a1.800 1.800 0 0 0 0 3.500z" fill="none" stroke="#3f86d8" /></Tile>
      <Obs s={11} />
      <svg width="11" height="11" viewBox="0 0 11 11" fill="none" stroke="#2490c8" strokeWidth="1.500"><rect x="1" y="1" width="9" height="9" strokeDasharray="3 2" /></svg>
      <Tile bg="#17300f"><path d="M1.500 5.500C4 2 7 2 9.500 5.500 7 9 4 9 1.500 5.500z" fill="none" stroke="#76c414" strokeWidth="1.300" /></Tile>
      <svg width="11" height="11" viewBox="0 0 11 11" fill="#c0392b"><path d="M0 4h2.500L6 1v9L2.500 7H0z" /><path d="M7.500 3c1.500 1.500 1.500 3.500 0 5M9 1.500c2.500 2.500 2.500 5.500 0 8" fill="none" stroke="#c0392b" /></svg>
      <svg width="11" height="11" viewBox="0 0 11 11" fill="#111"><rect x="3.500" y="0" width="4" height="7" rx="2" /><path d="M2 5c0 4.500 7 4.500 7 0M5.500 8v3M3.500 10.500h4" fill="none" stroke="#111" /></svg>
      <I of={Monitor} w={1.700} />
      <I of={Volume2} w={1.700} />
      <span>ENG</span>
      <Clock><span>21:15</span><span>28.02.2026</span></Clock>
      <I of={MessageSquare} s={12} w={1.700} />
    </Tray>
  </Taskbar>
);

export default function App() {
  return (
    <Desktop>
      <GlobalStyle />
      <Windows>
        <Browser><BrowserChrome /><Site /></Browser>
        <ChatWindow />
      </Windows>
      <TaskbarView />
      <Cursor width="9" height="14" viewBox="0 0 9 14"><path d="M1 1v10l2.500-2 1.500 3.500 1.500-.6L5 8.500h3z" fill="#fff" stroke="#333" strokeWidth=".9" /></Cursor>
    </Desktop>
  );
}
